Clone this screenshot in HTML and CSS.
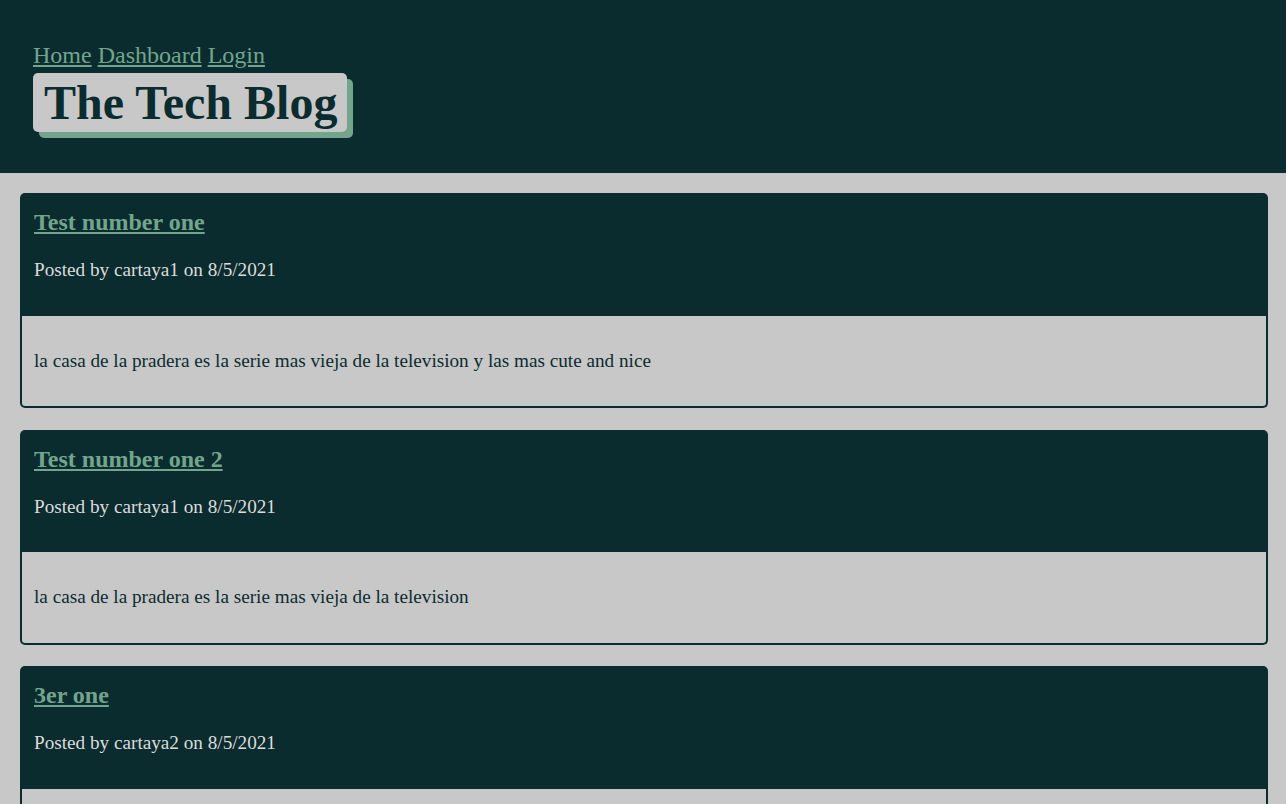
FILE: index.html
```html
<!DOCTYPE html>
<html lang="en">
<head>
<meta charset="utf-8">
<title>The Tech Blog</title>
<link rel="stylesheet" href="styles.css">
</head>
<body>
<header class="site-header">
  <nav class="nav">
    <a href="#">Home</a>
    <a href="#">Dashboard</a>
    <a href="#">Login</a>
  </nav>
  <h1 class="brand">The Tech Blog</h1>
</header>
<main class="posts">
  <article class="post">
    <div class="post-head">
      <h2 class="post-title"><a href="#">Test number one</a></h2>
      <p class="post-meta">Posted by cartaya1 on 8/5/2021</p>
    </div>
    <div class="post-body">
      <p>la casa de la pradera es la serie mas vieja de la television y las mas cute and nice</p>
    </div>
  </article>
  <article class="post">
    <div class="post-head">
      <h2 class="post-title"><a href="#">Test number one 2</a></h2>
      <p class="post-meta">Posted by cartaya1 on 8/5/2021</p>
    </div>
    <div class="post-body">
      <p>la casa de la pradera es la serie mas vieja de la television</p>
    </div>
  </article>
  <article class="post">
    <div class="post-head">
      <h2 class="post-title"><a href="#">3er one</a></h2>
      <p class="post-meta">Posted by cartaya2 on 8/5/2021</p>
    </div>
    <div class="post-body">
      <p>la casa de la pradera</p>
    </div>
  </article>
</main>
</body>
</html>
```
FILE: styles.css
```css
html, body {
  margin: 0;
  padding: 0;
}
body {
  background: #c8c8c8;
  font-family: "Liberation Serif", "Times New Roman", serif;
  color: #0b2c2f;
}
.site-header {
  background: #0b2c2f;
  height: 173px;
  box-sizing: border-box;
  padding: 40px 33px 0;
}
.nav {
  font-size: 24px;
  line-height: 30px;
}
.nav a {
  color: #72a58c;
  text-decoration: underline;
}
.brand {
  display: inline-block;
  margin: 3px 0 0;
  padding: 2px 10px 2px 11px;
  background: #c8c8c8;
  color: #0b2c2f;
  font-size: 48px;
  line-height: 55px;
  font-weight: bold;
  border-radius: 5px;
  box-shadow: 6px 6px 0 #72a58c;
}
.posts {
  padding: 20px 18px 0 20px;
}
.post {
  margin-bottom: 21.5px;
}
.post-head {
  background: #0b2c2f;
  border-radius: 5px 5px 0 0;
  height: 122.5px;
  box-sizing: border-box;
  padding: 16px 14px 0;
}
.post-title {
  margin: 0;
  font-size: 24px;
  line-height: 27px;
  font-weight: bold;
}
.post-title a {
  color: #72a58c;
  text-decoration: underline;
}
.post-meta {
  margin: 23px 0 0;
  font-size: 19.2px;
  line-height: 22px;
  color: #dcdcdc;
}
.post-body {
  border: 2px solid #0b2c2f;
  border-top: none;
  border-radius: 0 0 5px 5px;
  height: 92.5px;
  box-sizing: border-box;
  padding: 34px 12px 0;
}
.post-body p {
  margin: 0;
  font-size: 19.2px;
  line-height: 22px;
  color: #0b2c2f;
}
```
